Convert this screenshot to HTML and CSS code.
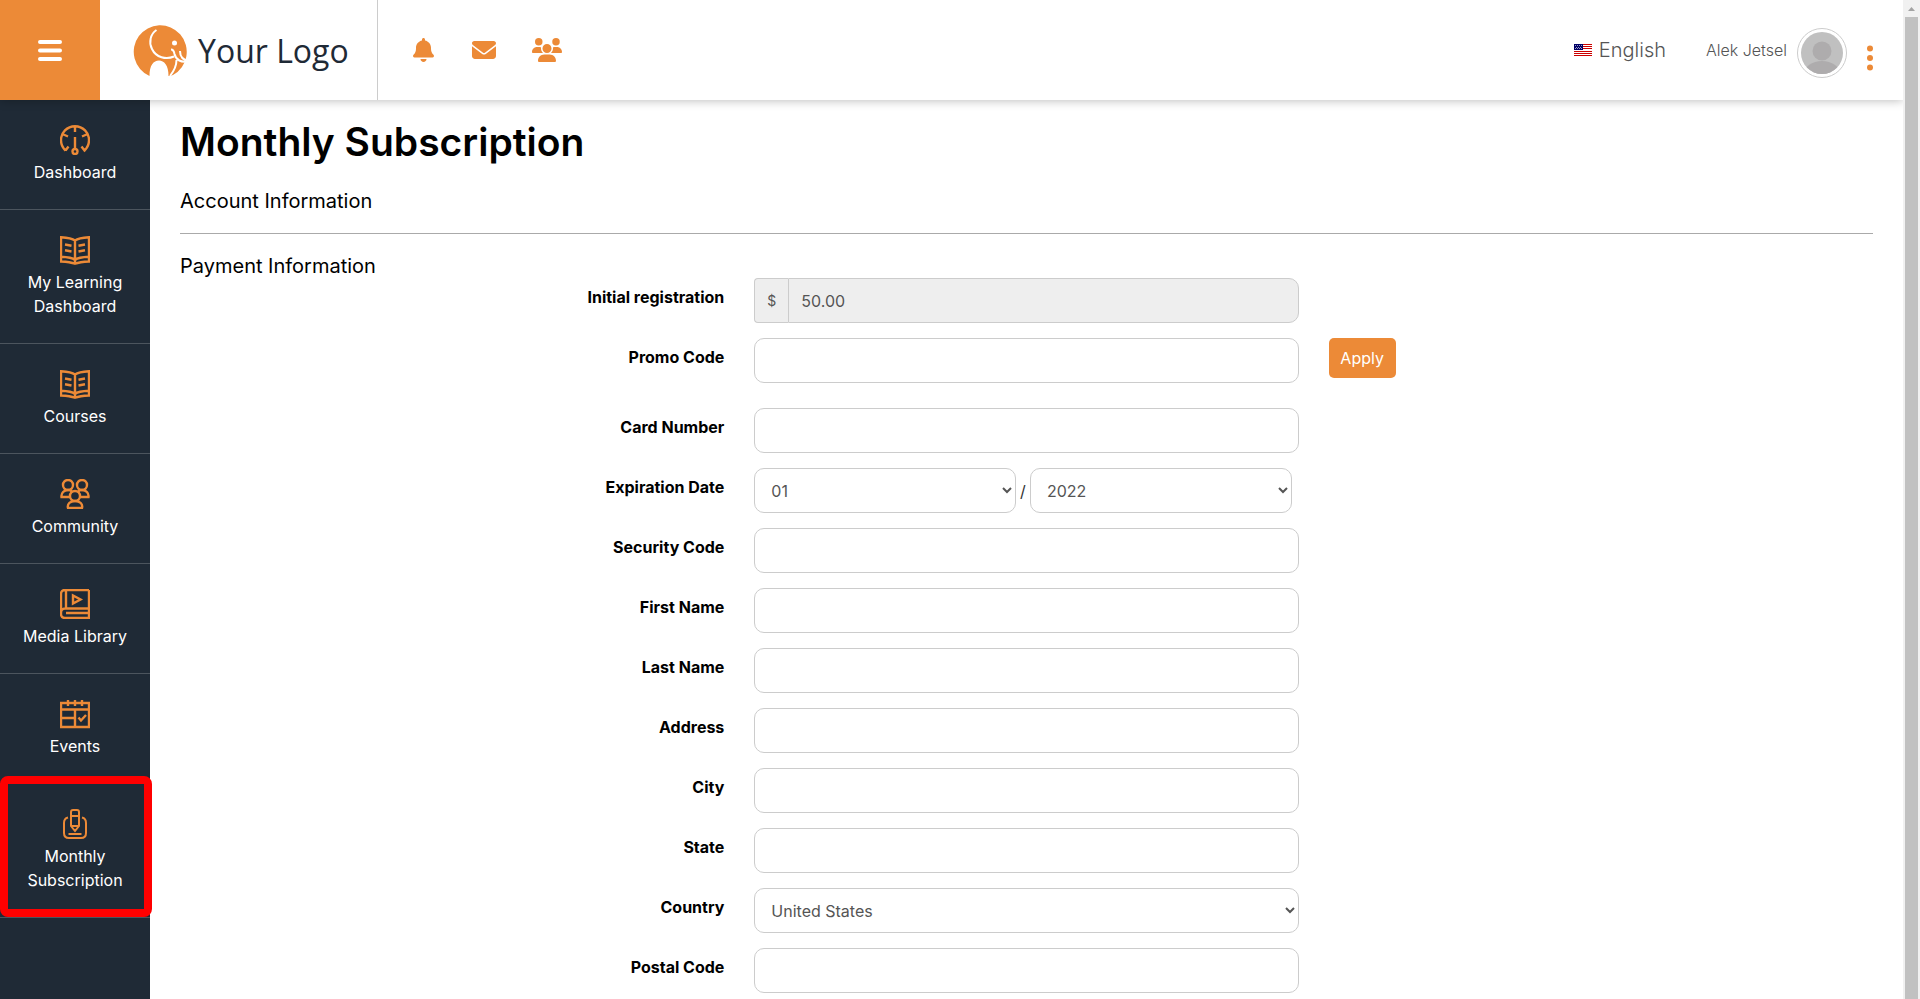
FILE: index.html
```html
<!DOCTYPE html>
<html lang="en">
<head>
  <meta charset="UTF-8" />
  <title>Monthly Subscription</title>
  <link rel="stylesheet" href="styles.css">
</head>
<body>
  <svg class="sprite" aria-hidden="true">
    <symbol id="icon-book" viewBox="0 0 30 30">
      <path d="M15 5.500C12 3.200 6 2.500 1 2.200V26.500C6 26.800 11 27.300 15 28.700C19 27.300 24 26.800 29 26.500V2.200C24 2.500 18 3.200 15 5.500V28M1 21.800C6 22 12 22.500 15 25C18 22.500 24 22 29 21.800M5 9.500L11.500 10.700M5 15.300L11.500 16.500M25 9.500L18.500 10.700M25 15.300L18.500 16.500" />
    </symbol>
  </svg>

  <div class="page">
    <header class="header">
      <button type="button" class="menu-toggle" aria-label="Menu">
        <svg width="24" height="22" viewBox="0 0 24 22"><path d="M2 3H22M2 11.500H22M2 20H22" /></svg>
      </button>
      <a href="#" class="logo">
        <svg width="57" height="54" viewBox="0 0 57 54">
          <path fill="#ec8a37" d="M16.500 52A26.500 26.500 0 1 1 40 51L37 52H35.500C35.500 41 31 36.500 26 36.500C20.500 36.500 16.500 41 16.500 52Z" />
          <path class="logo-line" d="M23.500 6C17.500 10 15.500 18 19 25C23 33.500 33 36 41 32.500M38 25.500C40.500 25.500 41 27 41.500 30C43 36 48 39 56 37M47 27C47 32 49 36 56 37M43.500 36C43.500 42 41 47 37 52" />
          <circle cx="41.500" cy="19" r="2.500" fill="#fff" />
        </svg>
        <span>Your Logo</span>
      </a>
      <nav class="quick-links">
        <a href="#" aria-label="Notifications">
          <svg width="21" height="24" viewBox="0 0 448 512"><path d="M224 0c-17.700 0-32 14.300-32 32l0 19.200C119 66 64 130.600 64 208l0 18.800c0 47-17.300 92.400-48.500 127.600l-7.400 8.300c-8.400 9.400-10.400 22.900-5.300 34.400S19.400 416 32 416l384 0c12.600 0 24-7.400 29.200-18.900s3.100-25-5.300-34.400l-7.400-8.300C401.300 319.200 384 273.900 384 226.800l0-18.800c0-77.400-55-142-128-156.800L256 32c0-17.700-14.300-32-32-32zm45.300 493.300c12-12 18.700-28.300 18.700-45.300l-64 0-64 0c0 17 6.700 33.300 18.700 45.300s28.300 18.700 45.300 18.700s33.300-6.700 45.300-18.700z" /></svg>
        </a>
        <a href="#" aria-label="Messages">
          <svg width="26" height="24" viewBox="-42 0 554 512"><path d="M48 64C21.500 64 0 85.500 0 112c0 15.100 7.100 29.300 19.200 38.400L236.800 313.600c11.400 8.500 27 8.500 38.400 0L492.800 150.400c12.100-9.100 19.200-23.300 19.200-38.400c0-26.500-21.500-48-48-48L48 64zM0 176L0 384c0 35.300 28.700 64 64 64l384 0c35.300 0 64-28.700 64-64l0-208L294.400 339.200c-22.800 17.100-54 17.100-76.800 0L0 176z" /></svg>
        </a>
        <a href="#" aria-label="Groups">
          <svg width="30" height="24" viewBox="0 0 640 512"><path d="M144 0a80 80 0 1 1 0 160A80 80 0 1 1 144 0zM512 0a80 80 0 1 1 0 160A80 80 0 1 1 512 0zM0 298.700C0 239.800 47.800 192 106.700 192l42.700 0c15.900 0 31 3.500 44.600 9.700c-1.300 7.200-1.900 14.700-1.900 22.300c0 38.200 16.800 72.500 43.300 96L21.300 320C9.600 320 0 310.400 0 298.700zM404.700 320c26.600-23.500 43.300-57.800 43.300-96c0-7.600-.7-15-1.900-22.300c13.600-6.300 28.700-9.700 44.600-9.700l42.700 0C592.200 192 640 239.800 640 298.700c0 11.800-9.600 21.300-21.300 21.300zM224 224a96 96 0 1 1 192 0 96 96 0 1 1 -192 0zM128 485.300C128 411.700 187.700 352 261.300 352l117.300 0C452.300 352 512 411.700 512 485.300c0 14.700-11.900 26.700-26.700 26.700l-330.700 0c-14.700 0-26.700-11.900-26.700-26.700z" /></svg>
        </a>
      </nav>
      <div class="account">
        <a href="#" class="language">
          <svg width="18" height="12" viewBox="0 0 18 12" shape-rendering="crispEdges">
            <path fill="#fff" d="M0 0H18V12H0Z" />
            <path stroke="#c00" d="M0 .5H18M0 2.500H18M0 4.500H18M0 7.500H18M0 9.500H18M0 11.500H18" />
            <path fill="#006" d="M0 0H9V6H0Z" />
            <path stroke="#fff" stroke-dasharray="1 1" opacity="0.600" d="M1 1.500H8M2 3.500H8M1 4.500H8" />
          </svg>
          English
        </a>
        <a href="#" class="user">Alek Jetsel</a>
        <svg class="avatar" width="50" height="50" viewBox="0 0 50 50">
          <clipPath id="avatar-clip"><circle cx="25" cy="25" r="21" /></clipPath>
          <circle cx="25" cy="25" r="24.500" fill="#fff" stroke="#ccc" />
          <circle cx="25" cy="25" r="21" fill="#c0c0c0" />
          <g fill="#aeacad" clip-path="url(#avatar-clip)">
            <circle cx="25" cy="23" r="9.500" />
            <ellipse cx="25" cy="46" rx="18" ry="13" />
          </g>
        </svg>
        <button type="button" class="more" aria-label="More">
          <svg width="6" height="26" viewBox="0 0 6 26"><circle cx="3" cy="3.500" r="3" /><circle cx="3" cy="13" r="3" /><circle cx="3" cy="22.500" r="3" /></svg>
        </button>
      </div>
    </header>

    <div class="body">
      <nav class="sidebar">
        <a href="#">
          <svg width="30" height="30" viewBox="0 0 30 30"><path d="M5.500 25.500A14 14 0 1 1 24.500 25.500L21.500 21.500M5.500 25.500L8.500 21.500M15 1V7M3.500 9.500L8 11.500M26.500 9.500L22 11.500M15 12V24" /><circle cx="15" cy="26.500" r="2.500" /></svg>
          Dashboard
        </a>
        <a href="#">
          <svg width="30" height="30"><use href="#icon-book" /></svg>
          My Learning Dashboard
        </a>
        <a href="#">
          <svg width="30" height="30"><use href="#icon-book" /></svg>
          Courses
        </a>
        <a href="#">
          <svg width="30" height="30" viewBox="0 0 30 30"><circle cx="8" cy="6" r="5" /><circle cx="22" cy="6" r="5" /><circle cx="15" cy="17" r="5" /><path d="M10 18H1.500C1 14 4 11 8 11Q11 11 12 13M20 18H28.500C29 14 26 11 22 11Q19 11 18 13M8 29H22C23 25 20 22 15 22S7 25 8 29Z" /></svg>
          Community
        </a>
        <a href="#">
          <svg width="30" height="30" viewBox="0 0 30 30"><path d="M29 1H5Q1 1 1 5V25Q1 29 5 29H29V1M6 1V19M29 19.500H5Q1 19.500 1 24M29 24H6M13 6.500V14.500L20.500 10.500Z" /></svg>
          Media Library
        </a>
        <a href="#">
          <svg width="30" height="30" viewBox="0 0 30 30"><path d="M1 4H29V28H1ZM1 10.500H29M15 10.500V28M1 19H15M8 1V7M15 1V7M22 1V7M18.500 18.500L21 21.500L26 16" /></svg>
          Events
        </a>
        <a href="#" class="active">
          <svg width="30" height="30" viewBox="0 0 30 30"><path d="M11 16V3Q11 1 13 1H17Q19 1 19 3V17L15 22L11 17V7H19M11 17H19M8 8.500Q4 9.500 4 14V24Q4 29 9 29H21Q26 29 26 24V14Q26 9.500 22 8.500M8.500 25H21.500" /></svg>
          Monthly Subscription
        </a>
      </nav>

      <main class="content">
        <h1>Monthly Subscription</h1>
        <h2>Account Information</h2>
        <hr>
        <h2>Payment Information</h2>
        <form>
          <div class="row">
            <label for="registration">Initial registration</label>
            <div class="amount">
              <span>$</span>
              <input type="text" id="registration" value="50.00" readonly />
            </div>
          </div>
          <div class="row promo">
            <label for="promo">Promo Code</label>
            <input type="text" id="promo" />
            <button type="button" class="apply">Apply</button>
          </div>
          <div class="row">
            <label for="card">Card Number</label>
            <input type="text" id="card" />
          </div>
          <div class="row">
            <label for="month">Expiration Date</label>
            <div class="expiration">
              <select id="month"><option>01</option><option>02</option><option>03</option></select>
              <span>/</span>
              <select id="year" aria-label="Expiration year"><option>2022</option><option>2023</option><option>2024</option></select>
            </div>
          </div>
          <div class="row">
            <label for="security">Security Code</label>
            <input type="text" id="security" />
          </div>
          <div class="row">
            <label for="first-name">First Name</label>
            <input type="text" id="first-name" />
          </div>
          <div class="row">
            <label for="last-name">Last Name</label>
            <input type="text" id="last-name" />
          </div>
          <div class="row">
            <label for="address">Address</label>
            <input type="text" id="address" />
          </div>
          <div class="row">
            <label for="city">City</label>
            <input type="text" id="city" />
          </div>
          <div class="row">
            <label for="state">State</label>
            <input type="text" id="state" />
          </div>
          <div class="row">
            <label for="country">Country</label>
            <select id="country"><option>United States</option><option>Canada</option></select>
          </div>
          <div class="row">
            <label for="postal">Postal Code</label>
            <input type="text" id="postal" />
          </div>
        </form>
      </main>
    </div>
  </div>

  <div class="scrollbar">
    <svg width="17" height="17" viewBox="0 0 17 17"><path d="M5 11L8.500 7L12 11Z" /></svg>
    <div class="thumb"></div>
  </div>
</body>
</html>
```
FILE: styles.css
```css
* {
  box-sizing: border-box;
}
body {
  display: flex;
  height: 100vh;
  margin: 0;
  overflow: hidden;
  background: #fff;
  color: #000;
  font-family: Inter, sans-serif;
  font-size: 16px;
  line-height: 24px;
}
a {
  color: inherit;
  text-decoration: none;
}
button {
  border: none;
  padding: 0;
  background: none;
  font: inherit;
  cursor: pointer;
}
svg {
  display: block;
  flex: none;
}
.sprite {
  position: absolute;
  width: 0;
  height: 0;
}
.page {
  flex: 1;
  display: flex;
  flex-direction: column;
  min-width: 0;
  overflow: hidden;
}

/* header */
.header {
  position: relative;
  z-index: 1;
  flex: none;
  display: flex;
  height: 100px;
  background: #fff;
  box-shadow: 0 0 10px rgba(0, 0, 0, 0.3);
}
.menu-toggle {
  display: flex;
  align-items: center;
  justify-content: center;
  width: 100px;
  background: #ec8a37;
}
.menu-toggle path {
  stroke: #fff;
  stroke-width: 4;
  stroke-linecap: round;
}
.logo {
  display: flex;
  align-items: center;
  gap: 8px;
  width: 278px;
  padding: 1px 0 0 33px;
  border-right: 1px solid #ccc;
  color: #1f2a36;
  font-family: "Open Sans", sans-serif;
  font-size: 32px;
}
.logo-line {
  fill: none;
  stroke: #fff;
  stroke-width: 2;
}
.quick-links {
  display: flex;
  align-items: center;
  gap: 36px;
  padding-left: 35px;
}
.quick-links path,
.more circle {
  fill: #ec8a37;
}
.account {
  display: flex;
  align-items: center;
  margin-left: auto;
  padding-right: 30px;
  color: #555;
}
.language {
  display: flex;
  align-items: center;
  gap: 7px;
  margin-right: 40px;
  font-size: 20px;
  font-weight: 300;
}
.user {
  margin-right: 10px;
  font-weight: 300;
}
.avatar {
  margin-top: 6px;
}
.more {
  margin: 16px 0 0 20px;
}

/* sidebar */
.body {
  flex: 1;
  display: flex;
  min-height: 0;
}
.sidebar {
  flex: none;
  width: 150px;
  background: #1f2a36;
}
.sidebar a {
  position: relative;
  display: flex;
  flex-direction: column;
  align-items: center;
  gap: 5px;
  padding: 25px 20px;
  border-bottom: 1px solid #4c555e;
  color: #fff;
  text-align: center;
  white-space: nowrap;
}
.sidebar a:nth-child(2),
.sidebar .active {
  white-space: normal;
}
.sidebar svg {
  fill: none;
  stroke: #ec8a37;
  stroke-width: 2.4;
}
.sidebar .active svg {
  stroke-width: 2;
}
.sidebar .active::after {
  content: "";
  position: absolute;
  top: -8px;
  right: -2px;
  bottom: 0;
  left: 0;
  border: 8px solid #f00;
  border-radius: 8px;
}

/* form */
.content {
  flex: 1;
  padding: 18px 30px;
}
h1 {
  margin: 0 0 23px;
  font-size: 39px;
  font-weight: 600;
  line-height: 48px;
}
h2 {
  margin: 0;
  font-size: 20px;
  font-weight: 400;
  line-height: 24px;
}
hr {
  margin: 20px 0;
  border: none;
  border-top: 1px solid #aaa;
}
.row {
  display: grid;
  grid-template-columns: 1fr 1fr 1fr;
  gap: 30px;
  margin-bottom: 15px;
}
.promo {
  margin-bottom: 25px;
}
label {
  padding-top: 7px;
  font-size: 16px;
  font-weight: 700;
  text-align: right;
}
input,
select {
  width: 100%;
  height: 45px;
  padding: 0 16px;
  border: 1px solid #ccc;
  border-radius: 10px;
  background: #fff;
  color: #555;
  font: inherit;
}
select {
  padding: 0 0 0 12px;
}
.amount {
  display: flex;
}
.amount span {
  display: flex;
  align-items: center;
  justify-content: center;
  width: 34px;
  border: 1px solid #ccc;
  border-right: none;
  border-radius: 4px 0 0 4px;
  background: #eee;
  color: #555;
  font-size: 14px;
}
.amount input {
  flex: 1;
  padding: 0 12px;
  border-radius: 0 10px 10px 0;
  background: #eee;
}
.expiration {
  display: flex;
  align-items: center;
  gap: 4px;
  margin-right: 7px;
}
.expiration select {
  flex: 1;
}
.expiration span {
  color: #333;
}
.apply {
  justify-self: start;
  width: 67px;
  height: 40px;
  border-radius: 5px;
  background: #ec8a37;
  color: #fff;
}

/* scrollbar */
.scrollbar {
  width: 17px;
  background: #f1f1f1;
}
.scrollbar path {
  fill: #a3a3a3;
}
.thumb {
  height: 100%;
  margin: 0 2px;
  background: #c1c1c1;
}
```
